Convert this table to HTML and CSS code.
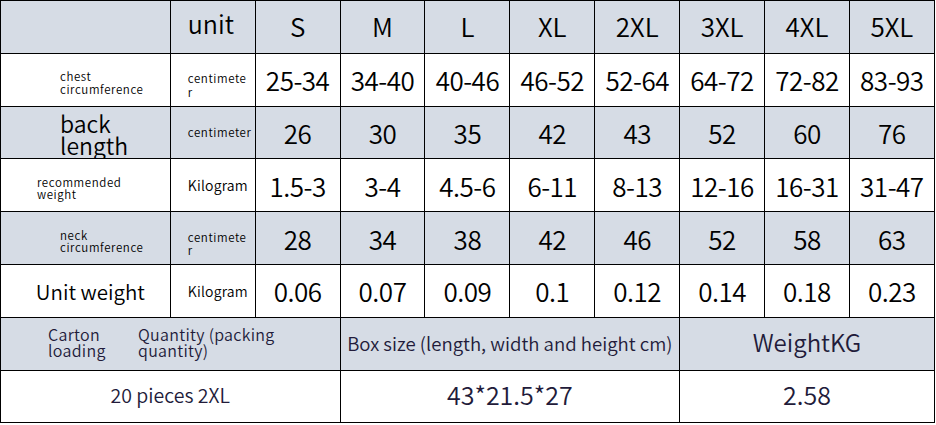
FILE: index.html
```html
<!DOCTYPE html>
<html>
<head>
<meta charset="utf-8">
<link rel="stylesheet" href="styles.css">
</head>
<body>
<div class="sheet">
  <div class="cell head span2"></div>
  <div class="cell head unit-h">unit</div>
  <div class="cell head size">S</div>
  <div class="cell head size">M</div>
  <div class="cell head size">L</div>
  <div class="cell head size">XL</div>
  <div class="cell head size">2XL</div>
  <div class="cell head size">3XL</div>
  <div class="cell head size">4XL</div>
  <div class="cell head size">5XL</div>

  <div class="cell span2 label small pad60 lower">chest<br>circumference</div>
  <div class="cell unit small">centimete<br>r</div>
  <div class="cell val">25-34</div>
  <div class="cell val">34-40</div>
  <div class="cell val">40-46</div>
  <div class="cell val">46-52</div>
  <div class="cell val">52-64</div>
  <div class="cell val">64-72</div>
  <div class="cell val">72-82</div>
  <div class="cell val">83-93</div>

  <div class="cell grey span2 label big pad60 backlen">back<br>length</div>
  <div class="cell grey unit small single">centimeter</div>
  <div class="cell grey val">26</div>
  <div class="cell grey val">30</div>
  <div class="cell grey val">35</div>
  <div class="cell grey val">42</div>
  <div class="cell grey val">43</div>
  <div class="cell grey val">52</div>
  <div class="cell grey val">60</div>
  <div class="cell grey val">76</div>

  <div class="cell span2 label small pad36 lower">recommended<br>weight</div>
  <div class="cell unit kg">Kilogram</div>
  <div class="cell val">1.5-3</div>
  <div class="cell val">3-4</div>
  <div class="cell val">4.5-6</div>
  <div class="cell val">6-11</div>
  <div class="cell val">8-13</div>
  <div class="cell val">12-16</div>
  <div class="cell val">16-31</div>
  <div class="cell val">31-47</div>

  <div class="cell grey span2 label small pad60 lower">neck<br>circumference</div>
  <div class="cell grey unit small">centimete<br>r</div>
  <div class="cell grey val">28</div>
  <div class="cell grey val">34</div>
  <div class="cell grey val">38</div>
  <div class="cell grey val">42</div>
  <div class="cell grey val">46</div>
  <div class="cell grey val">52</div>
  <div class="cell grey val">58</div>
  <div class="cell grey val">63</div>

  <div class="cell span2 center unitw">Unit weight</div>
  <div class="cell unit kg">Kilogram</div>
  <div class="cell val">0.06</div>
  <div class="cell val">0.07</div>
  <div class="cell val">0.09</div>
  <div class="cell val">0.1</div>
  <div class="cell val">0.12</div>
  <div class="cell val">0.14</div>
  <div class="cell val">0.18</div>
  <div class="cell val">0.23</div>

  <div class="cell grey span4 carton">
    <div class="carton-a">Carton<br>loading</div>
    <div class="carton-b">Quantity (packing<br>quantity)</div>
  </div>
  <div class="cell grey span4 center box">Box size (length, width and height cm)</div>
  <div class="cell grey span3 center wkg">WeightKG</div>

  <div class="cell span4 center pieces">20 pieces 2XL</div>
  <div class="cell span4 center foot">43*21.5*27</div>
  <div class="cell span3 center foot">2.58</div>
</div>
</body>
</html>
```
FILE: styles.css
```css
html, body {
  margin: 0;
  padding: 0;
  background: #ffffff;
}

.sheet {
  display: grid;
  grid-template-columns: repeat(11, 84.9px);
  grid-template-rows: repeat(8, 52.8px);
  border-left: 1px solid #000;
  border-top: 1px solid #000;
  width: max-content;
  font-family: "Noto Sans CJK SC", "Noto Sans", sans-serif;
  font-weight: 350;
  color: #000;
}

.cell {
  box-sizing: border-box;
  border-right: 1px solid #000;
  border-bottom: 1px solid #000;
  display: flex;
  align-items: center;
  overflow: hidden;
  white-space: nowrap;
  background: #ffffff;
}

.head, .grey {
  background: #d6dce5;
}

.span2 { grid-column: span 2; }
.span3 { grid-column: span 3; }
.span4 { grid-column: span 4; }

.unit-h {
  align-items: flex-start;
  padding: 7px 0 0 17px;
  font-size: 25px;
  line-height: 30px;
}

.size {
  justify-content: center;
  font-size: 26px;
  padding-bottom: 2px;
}

.val {
  justify-content: center;
  font-size: 26px;
  letter-spacing: -0.5px;
}

.label {
  line-height: 1;
}

.small {
  font-size: 11.5px;
  letter-spacing: 0.6px;
  line-height: 12.5px;
}

.lower {
  padding-top: 6px;
}

.big {
  font-size: 23px;
  line-height: 22px;
}

.backlen {
  padding-top: 4px;
}

.unitw {
  font-size: 20.5px;
  padding-left: 10px;
}

.pad60 { padding-left: 59px; }
.pad36 { padding-left: 36px; }

.unit {
  padding-left: 17px;
}

.unit.small {
  line-height: 13.5px;
  padding-top: 12px;
}

.unit.small.single {
  padding-top: 0;
}

.kg {
  font-size: 14px;
  letter-spacing: 0.2px;
}

.center {
  justify-content: center;
}

.carton {
  color: #221b3a;
  font-size: 16px;
  line-height: 16px;
  align-items: center;
  padding-bottom: 3px;
}

.carton-a {
  padding-left: 47px;
  width: 137px;
  box-sizing: border-box;
  flex: none;
  letter-spacing: 0.3px;
}

.carton-b {
  letter-spacing: 0.3px;
}

.box {
  color: #221b3a;
  font-size: 18.6px;
  padding-bottom: 2px;
}

.wkg {
  color: #221b3a;
  font-size: 24px;
  padding-bottom: 4px;
}

.pieces {
  color: #221b3a;
  font-size: 19.5px;
  padding-bottom: 4px;
}

.foot {
  color: #221b3a;
  font-size: 25px;
  padding-bottom: 4px;
}
```
